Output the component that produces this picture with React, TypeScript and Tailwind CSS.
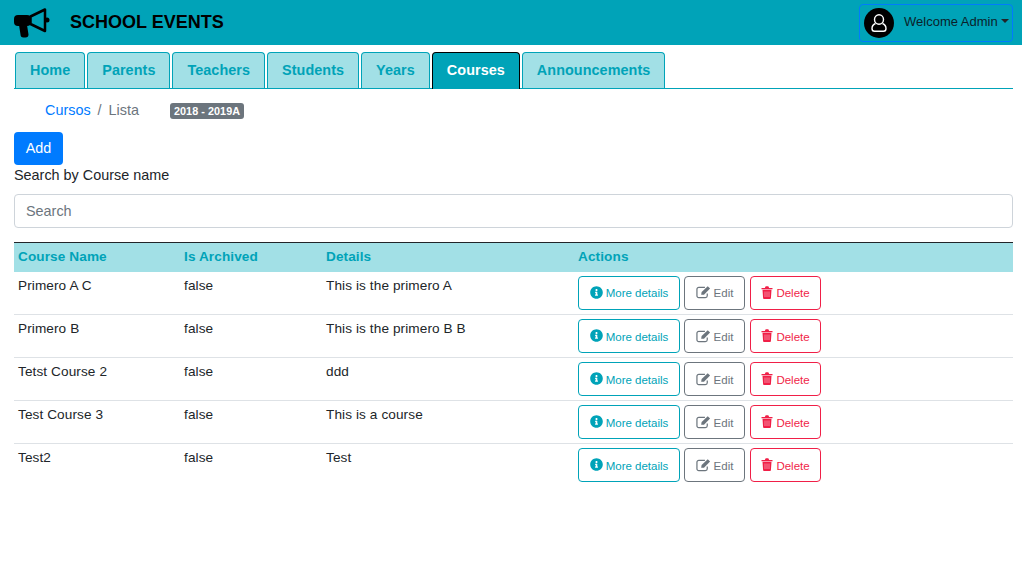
import React from 'react';
import { FaInfoCircle } from 'react-icons/fa';

const tabs = ['Home', 'Parents', 'Teachers', 'Students', 'Years', 'Courses', 'Announcements'];

const courses = [
  { name: 'Primero A C', details: 'This is the primero A' },
  { name: 'Primero B', details: 'This is the primero B B' },
  { name: 'Tetst Course 2', details: 'ddd' },
  { name: 'Test Course 3', details: 'This is a course' },
  { name: 'Test2', details: 'Test' },
];

const Megaphone = () => (
  <svg viewBox="0 0 37 30" className="h-[30px] w-[37px]" fill="#000">
    <rect x="0" y="7" width="17" height="11" rx="4" />
    <path d="M16.500 8.500 L31 1.500 L31 23 L16.500 16 Z" fill="#00a3b8" stroke="#000" strokeWidth="2.500" strokeLinejoin="round" />
    <circle cx="33" cy="12" r="2.500" />
    <path d="M5 17h8l1.500 9.500c0 2-1 3-3 3h-2c-2 0-3-1-3-3z" />
  </svg>
);

const UserOutline = () => (
  <svg viewBox="0 0 16 18" className="h-[18px] w-[16px]" fill="none" stroke="#fff" strokeWidth="1.400">
    <ellipse cx="8" cy="5.500" rx="4.500" ry="4.800" />
    <path d="M4.500 9.500C2 10.500 1 12 1 14.500c0 1.700 1 2.800 2.500 2.800h9c1.500 0 2.500-1.100 2.500-2.800 0-2.500-1-4-3.500-5" />
  </svg>
);

const EditIcon = () => (
  <svg viewBox="0 0 16 14" className="mb-[1px] h-[14px] w-[15px]">
    <path d="M12 8.500v2.500a2 2 0 0 1-2 2H3a2 2 0 0 1-2-2V4a2 2 0 0 1 2-2h6.500" fill="none" stroke="currentColor" strokeWidth="1.300" />
    <path d="M5.500 9.800 L6 7 L12.500 .8 L15 3.200 L8.500 9.800 z" fill="currentColor" />
  </svg>
);

const TrashIcon = () => (
  <svg viewBox="0 0 12 13" className="mb-[1px] h-[13px] w-[12px]" fill="currentColor">
    <path d="M3.800 2 L4.700 .3h2.600L8.200 2h3.300v1.300H.5V2z" />
    <path d="M1.500 3.800h9l-.6 8.400a.9.9 0 0 1-.9.8H3a.9.9 0 0 1-.9-.8z" />
    <path d="M4 5.500v5.500M6 5.500v5.500M8 5.500v5.500" stroke="#fff" strokeWidth=".8" strokeOpacity=".6" />
  </svg>
);

export default function App() {
  return (
    <div className="min-h-[577px] bg-white font-['Liberation_Sans',Arial,sans-serif] text-[#212529]">
      <header className="flex h-[45px] items-center justify-between bg-[#00a3b8] pl-[14px] pr-[9px]">
        <div className="flex items-center">
          <Megaphone />
          <span className="ml-[19px] text-[18px] font-bold text-black">SCHOOL EVENTS</span>
        </div>
        <div className="flex h-[38px] w-[154px] items-center rounded-[4px] border border-[#007bff] pl-[4px]">
          <span className="flex h-[30px] w-[30px] items-center justify-center rounded-full bg-black">
            <UserOutline />
          </span>
          <span className="mb-[2px] ml-[10px] whitespace-nowrap text-[13px] text-[#0b1f2a]">Welcome Admin</span>
          <span className="mb-[3px] ml-[3px] h-0 w-0 border-x-[4px] border-t-[4px] border-x-transparent border-t-[#212529]" />
        </div>
      </header>

      <nav className="ml-[14px] mr-[9px] mt-[7px] flex h-[37px] border-b border-[#00a3b8] pl-px">
        {tabs.map((tab) => (
          <div
            key={tab}
            className={
              tab === 'Courses'
                ? 'mr-[2px] flex h-[37px] items-center rounded-t-[4px] border border-b-0 border-black bg-[#00a3b8] px-[14px] text-[14.4px] font-bold tracking-[0.06px] text-white'
                : 'mr-[2px] flex h-[36px] items-center rounded-t-[4px] border border-b-0 border-[#00a3b8] bg-[#a2e0e6] px-[14px] text-[14.4px] font-bold tracking-[0.06px] text-[#00a3b8]'
            }
          >
            {tab}
          </div>
        ))}
      </nav>

      <div className="flex h-[43px] items-center pl-[45px] text-[14.4px]">
        <span className="text-[#007bff]">Cursos</span>
        <span className="mx-[7px] text-[#6c757d]">/</span>
        <span className="text-[#6c757d]">Lista</span>
        <span className="ml-[31px] rounded-[3px] bg-[#6c757d] px-[4px] py-[2px] text-[10.8px] leading-[12px] font-bold tracking-[0.05px] text-white">
          2018 - 2019A
        </span>
      </div>

      <main className="pl-[14px] pr-[9px]">
        <button className="block h-[33px] w-[49px] rounded-[4px] bg-[#007bff] text-[14.4px] text-white">Add</button>
        <div className="text-[14.4px] leading-[20px]">Search by Course name</div>
        <div className="mt-[9px] flex h-[34px] items-center rounded-[4px] border border-[#ced4da] pl-[11px] pt-[1px] text-[14.4px] text-[#6c757d]">
          Search
        </div>

        <table className="mt-[14px] w-full table-fixed border-t border-[#212529] text-[13.6px] tracking-[0.1px]">
          <colgroup>
            <col className="w-[166px]" />
            <col className="w-[142px]" />
            <col className="w-[252px]" />
            <col />
          </colgroup>
          <thead>
            <tr className="h-[29px] bg-[#a2e0e6] text-left font-bold text-[#00a3b8]">
              <th className="px-[4px]">Course Name</th>
              <th className="px-[4px]">Is Archived</th>
              <th className="px-[4px]">Details</th>
              <th className="px-[4px]">Actions</th>
            </tr>
          </thead>
          <tbody>
            {courses.map((course) => (
              <tr key={course.name} className="h-[43px] border-b border-[#dee2e6] align-top last:border-b-0">
                <td className="px-[4px] pt-[4px]">{course.name}</td>
                <td className="px-[4px] pt-[4px]">false</td>
                <td className="px-[4px] pt-[4px]">{course.details}</td>
                <td className="px-[4px] pt-[4px]">
                  <div className="flex text-[11.5px] tracking-normal">
                    <button className="flex h-[34px] w-[102px] items-center justify-center gap-[3px] rounded-[4px] border border-[#00a3b8] text-[#00a3b8]">
                      <FaInfoCircle className="mb-[1px] h-[13px] w-[13px]" /> <span className="pt-[3px]">More details</span>
                    </button>
                    <button className="ml-[4px] flex h-[34px] w-[61px] items-center justify-center gap-[3px] rounded-[4px] border border-[#6c757d] text-[#6c757d]">
                      <EditIcon /> <span className="pt-[3px]">Edit</span>
                    </button>
                    <button className="ml-[5px] flex h-[34px] w-[71px] items-center justify-center gap-[3px] rounded-[4px] border border-[#f01f47] text-[#f01f47]">
                      <TrashIcon /> <span className="pt-[3px]">Delete</span>
                    </button>
                  </div>
                </td>
              </tr>
            ))}
          </tbody>
        </table>
      </main>
    </div>
  );
}
